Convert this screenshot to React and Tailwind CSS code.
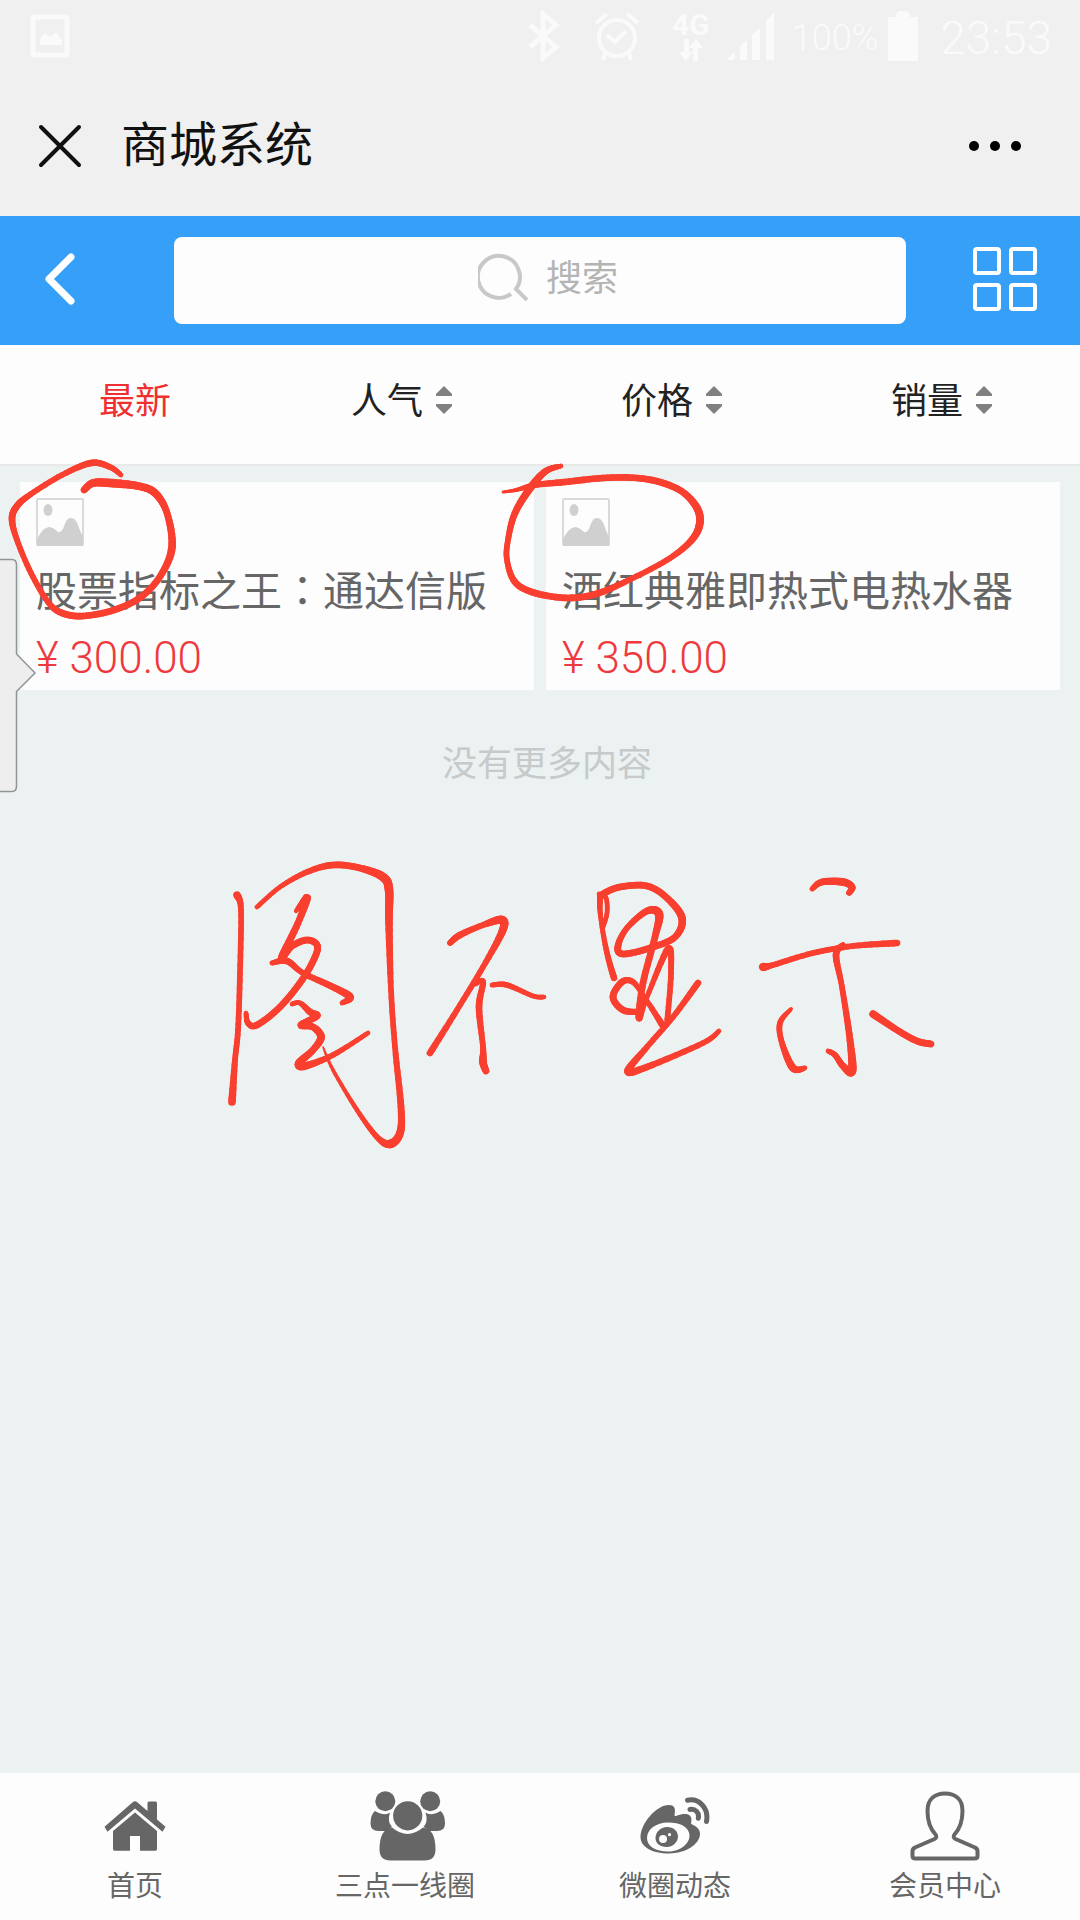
const tabs = [
  { label: "最新", active: true },
  { label: "人气", sortable: true },
  { label: "价格", sortable: true },
  { label: "销量", sortable: true },
];

const products = [
  {
    id: 1,
    name: (
      <>
        股票指标之王
        <span className="font-[family-name:'Noto_Sans_CJK_TC',sans-serif] leading-none">：</span>
        通达信版
      </>
    ),
    price: "300.00",
  },
  { id: 2, name: "酒红典雅即热式电热水器", price: "350.00" },
];

const navItems = [
  { label: "首页", icon: <HomeIcon /> },
  { label: "三点一线圈", icon: <PeopleIcon /> },
  { label: "微圈动态", icon: <WeiboIcon /> },
  { label: "会员中心", icon: <MemberIcon /> },
];

// pen strokes, every point is [x, y, pen width]
const strokes = [
  [[121, 475, 4], [110, 467, 5], [91, 463, 6], [62, 475, 5], [31, 494, 5], [17, 506, 6], [12, 519, 6], [17, 540, 5], [31, 573, 5], [48, 602, 5], [62, 613, 6], [83, 616, 6], [114, 610, 6], [141, 597, 6], [161, 575, 6], [172, 547, 7], [167, 513, 6], [155, 493, 7], [138, 486, 7], [110, 483, 8], [93, 483, 7], [84, 490, 6]],
  [[503, 492, 2], [516, 490, 3], [535, 485, 5], [565, 482, 6], [603, 478, 6], [637, 478, 6], [663, 483, 6], [684, 493, 6], [698, 510, 7], [699, 527, 7], [689, 543, 6], [667, 560, 5], [633, 578, 5], [599, 593, 6], [569, 598, 6], [535, 593, 6], [515, 582, 6], [507, 560, 5], [508, 540, 5], [515, 513, 6], [531, 487, 7], [546, 471, 6], [561, 466, 4]],
  [[237, 895, 7], [241, 910, 5], [240, 973, 5], [238, 1030, 5], [235, 1060, 5], [232, 1102, 7]],
  [[257, 907, 4], [280, 887, 4], [307, 872, 5], [333, 865, 6], [360, 868, 6], [383, 877, 8], [389, 890, 8], [389, 923, 7], [391, 990, 5], [395, 1047, 5], [401, 1107, 6], [400, 1133, 7], [390, 1144, 8], [377, 1137, 5], [357, 1110, 4], [333, 1070, 3], [323, 1047, 1]],
  [[296, 911, 3], [307, 898, 7], [298, 923, 6], [282, 957, 7], [292, 946, 6], [307, 940, 6], [317, 945, 6], [315, 957, 6], [302, 980, 6], [280, 1007, 6], [257, 1025, 6], [248, 1023, 5], [246, 1013, 4]],
  [[272, 963, 4], [287, 961, 6], [303, 973, 5], [333, 987, 6], [350, 997, 7], [342, 1003, 4]],
  [[292, 1004, 4], [300, 1003, 4], [310, 1012, 6], [317, 1016, 6], [301, 1025, 6], [313, 1027, 6], [321, 1037, 7], [313, 1050, 6], [299, 1063, 7], [305, 1066, 7], [333, 1055, 5], [368, 1033, 4]],
  [[450, 943, 5], [460, 935, 6], [483, 925, 5], [502, 920, 8], [502, 932, 7], [483, 967, 5], [457, 1010, 5], [430, 1053, 6]],
  [[475, 984, 4], [483, 982, 5], [479, 1007, 6], [483, 1047, 5], [483, 1062, 7], [486, 1071, 6]],
  [[492, 985, 4], [507, 985, 5], [533, 996, 4], [544, 997, 4]],
  [[614, 978, 6], [607, 953, 5], [601, 920, 4], [600, 900, 5], [603, 894, 6], [620, 887, 6], [647, 886, 6], [667, 898, 6], [682, 918, 7], [675, 937, 6], [650, 948, 6], [623, 954, 6], [618, 946, 6], [627, 928, 5], [647, 911, 6], [659, 914, 8], [655, 937, 6], [643, 983, 6], [639, 1018, 6], [647, 997, 4], [668, 949, 6], [671, 973, 5], [667, 1023, 5]],
  [[599, 894, 4], [606, 898, 4], [607, 913, 4], [603, 927, 4]],
  [[640, 1012, 5], [623, 1010, 6], [613, 997, 6], [622, 982, 6], [633, 982, 5], [645, 998, 4], [663, 1026, 6]],
  [[698, 983, 6], [673, 1017, 5], [647, 1047, 5], [628, 1071, 7], [647, 1067, 6], [703, 1043, 5], [719, 1031, 4]],
  [[812, 889, 4], [822, 882, 6], [843, 882, 7], [852, 887, 6], [849, 893, 5]],
  [[763, 967, 8], [773, 965, 5], [813, 953, 5], [853, 946, 5], [897, 943, 6]],
  [[843, 945, 5], [836, 955, 6], [842, 987, 5], [850, 1040, 6], [852, 1071, 8], [843, 1066, 6], [835, 1055, 5], [828, 1051, 4]],
  [[791, 1009, 3], [780, 1023, 5], [782, 1043, 5], [793, 1068, 7], [805, 1068, 4]],
  [[873, 1014, 7], [897, 1030, 6], [917, 1041, 6], [931, 1044, 6]],
];

function curve(a, b, c, d, t) {
  return (
    0.5 *
    (2 * b + (c - a) * t + (2 * a - 5 * b + 4 * c - d) * t * t + (3 * b - a - 3 * c + d) * t * t * t)
  );
}

function samplePoints(points) {
  const steps = 8;
  const result = [];

  for (let i = 0; i < points.length - 1; i++) {
    const before = points[i - 1] || points[i];
    const from = points[i];
    const to = points[i + 1];
    const after = points[i + 2] || to;

    for (let s = 0; s < steps; s++) {
      const t = s / steps;
      result.push([
        curve(before[0], from[0], to[0], after[0], t),
        curve(before[1], from[1], to[1], after[1], t),
        from[2] + (to[2] - from[2]) * t,
      ]);
    }
  }

  result.push(points[points.length - 1]);
  return result;
}

function PenStroke({ points }) {
  const samples = samplePoints(points);

  return samples.slice(1).map((point, index) => (
    <line
      key={index}
      x1={samples[index][0]}
      y1={samples[index][1]}
      x2={point[0]}
      y2={point[1]}
      strokeWidth={point[2] + 0.7}
    />
  ));
}

function PenMarks() {
  return (
    <svg
      className="absolute top-0 left-0 pointer-events-none"
      width="1080"
      height="1200"
      viewBox="0 0 1080 1200"
      stroke="#f93f2f"
      strokeLinecap="round"
      aria-hidden="true"
    >
      {strokes.map((points, index) => (
        <PenStroke key={index} points={points} />
      ))}
    </svg>
  );
}

function HomeIcon() {
  return (
    <svg width="62" height="50" viewBox="0 0 62 50" fill="currentColor" className="mb-[10px]">
      <path d="M29 1q2-1.500 4 0L43.500 10V2q0-1.500 1.500-1.500h6.500Q53 .5 53 2v16.500l8.500 7.200-3 5L31 7.500 3.500 30.700l-3-5Z" />
      <path d="M31 11.500 53 30v18q0 1.700-1.700 1.700H36V35H26v14.700H10.700Q9 49.700 9 48V30Z" />
    </svg>
  );
}

function PeopleIcon() {
  return (
    <svg width="80" height="70" viewBox="-5 0 80 70" fill="currentColor">
      <circle cx="15.300" cy="10.300" r="10" />
      <circle cx="60.200" cy="10.300" r="10" />
      <path d="M5 20q10 5.500 15 1.500-3 9 2 14.500-3 1-5 4H8.500Q.5 40 .5 32.500.5 23.500 5 20Z" />
      <path d="M70.500 20q-10 5.500-15 1.500 3 9-2 14.500 3 1 5 4H67q8 0 8-7.500 0-9-4.500-12.500Z" />
      <circle cx="37.700" cy="24.800" r="14.600" />
      <path d="M22 36.500q15.500 13 31 0 12.500 1.500 12.500 22 0 11-11 11h-34q-11 0-11-11Q9.500 38 22 36.500Z" />
    </svg>
  );
}

function WeiboIcon() {
  return (
    <svg width="70" height="58" viewBox="0 0 70 58" fill="currentColor" className="mb-[6px]">
      <path
        fillRule="evenodd"
        d="M.5 40C.5 27 16 8 29 8c5 0 7 3 5.600 9.500-.3 1.500.5 1.800 2 1.300 9-3.500 16.500-2 14.600 6.500-.4 1.500.3 2 1.500 2.500 4 1.500 7.300 5 7.300 9C60 47 46 56.500 29 56.500S.5 50 .5 40ZM28 25.500C16 25.500 7 32.500 7 41s9 13.500 21 13.500S49.500 47 49.500 38.500 40 25.500 28 25.500Z"
      />
      <path
        fillRule="evenodd"
        d="M27 30c6.500 0 11 4 11 9.500S33 50 26.500 50 15.500 46.500 15.500 41 20.500 30 27 30Zm-4 8a4 4 0 1 0 .1 8 4 4 0 0 0-.1-8Zm6.500-2a1.600 1.600 0 1 0 .1 3.200 1.600 1.600 0 0 0-.1-3.200Z"
      />
      <path
        d="M47.500 3.200C59 1 69 11 66.500 24.500M50 12.500c5-1 9.500 3 8.300 8.700"
        fill="none"
        stroke="currentColor"
        strokeWidth="5"
        strokeLinecap="round"
      />
    </svg>
  );
}

function MemberIcon() {
  return (
    <svg width="70" height="70" viewBox="0 0 70 70" fill="none" stroke="currentColor" strokeWidth="4" strokeLinejoin="round">
      <path d="M35 2.500C25 2.500 17.500 8 17.500 20c0 12 3 18 8 23.500 1.500 2 1 3.500-1 4.500L5 56.500Q2.500 58 2.500 60v5q0 2.500 3 2.500h59q3 0 3-2.500v-5q0-2-2.500-3.500L45.500 48c-2-1-2.500-2.500-1-4.500 5-5.500 8-11.500 8-23.500C52.500 8 45 2.500 35 2.500Z" />
    </svg>
  );
}

function SortIcon() {
  return (
    <svg width="18" height="28" viewBox="0 0 18 28" fill="#808080" className="mb-1">
      <path d="M9 0 17 8v2H1V8Z" />
      <path d="M9 28 17 20v-2H1v2Z" />
    </svg>
  );
}

function PlaceholderImage() {
  return (
    <svg width="48" height="48" viewBox="0 0 48 48" fill="#d0d0d0" className="block">
      <rect x="1" y="1" width="46" height="46" rx="1" fill="none" stroke="#dadada" strokeWidth="2" />
      <ellipse cx="12" cy="12" rx="4.500" ry="6" />
      <path d="M1 42C5 32 10 29 14 29q4 1 8 5 3 1 5-3C30 23 31 20 35 20s7 5 8 10l4 9v9H1Z" />
    </svg>
  );
}

function StatusBar() {
  return (
    <div className="flex h-[72px] items-center pr-7 pl-[30px] text-[#fafafa]">
      <svg width="40" height="44" viewBox="0 0 40 44" fill="none" stroke="currentColor" strokeWidth="5">
        <rect x="3" y="3" width="34" height="38" rx="1" />
        <path d="M10 31v-6l5-6 5 4 6-5 6 8v5Z" fill="currentColor" stroke="none" />
      </svg>
      <svg className="ml-auto" width="32" height="50" viewBox="0 0 32 50" fill="none" stroke="currentColor" strokeWidth="5">
        <path d="m2 14 26 22-13 11V3l13 11L2 36" />
      </svg>
      <svg className="ml-[34px]" width="46" height="50" viewBox="0 0 46 50" fill="none" stroke="currentColor" strokeWidth="4">
        <circle cx="23" cy="27" r="18" />
        <path d="m13 24 8 7 11-11M2 12l11-9M44 12 33 3M11 42l-2 7M35 42l2 7" />
      </svg>
      <div className="ml-8 flex flex-col items-center">
        <span className="text-[30px] leading-[28px] font-bold">4G</span>
        <svg width="24" height="22" viewBox="0 0 24 22" fill="currentColor">
          <path d="M5 0h5v13h4l-7 9-7-9h5ZM14 22h5V9h5l-7-9-7 9h4Z" />
        </svg>
      </div>
      <svg className="ml-[18px]" width="46" height="48" viewBox="0 0 46 48" fill="currentColor">
        <path d="M0 48v-2l7-6v8ZM12 48V34l7-6v20ZM24 48V23l8-7v32ZM38 48V9l8-9v48Z" />
      </svg>
      <span className="ml-[18px] pt-1 text-[36px] leading-none font-light">100%</span>
      <svg className="ml-[10px]" width="30" height="50" viewBox="0 0 30 50" fill="currentColor">
        <path d="M0 6h8V3l3-3h8l3 3v3h8v44H0Z" />
      </svg>
      <span className="ml-[22px] pt-1 text-[46px] leading-none font-light">23:53</span>
    </div>
  );
}

export default function App() {
  return (
    <div className="relative flex min-h-screen flex-col overflow-hidden bg-[#ecf1f2] font-[family-name:Roboto,'Noto_Sans_CJK_SC',sans-serif]">
      <header className="bg-[#f0f0f0]">
        <StatusBar />
        <div className="flex h-36 items-center pt-[3px] pr-[58px] pl-[38px] text-[#111]">
          <button type="button" aria-label="关闭">
            <svg width="44" height="44" viewBox="0 0 44 44" stroke="currentColor" strokeWidth="4" strokeLinecap="round">
              <path d="m3 3 38 38M41 3 3 41" />
            </svg>
          </button>
          <h1 className="ml-[39px] text-[48px] leading-[72px]">商城系统</h1>
          <button type="button" aria-label="更多" className="ml-auto">
            <svg width="54" height="12" viewBox="0 0 54 12" fill="#000">
              <circle cx="6" cy="6" r="5" />
              <circle cx="27" cy="6" r="5" />
              <circle cx="48" cy="6" r="5" />
            </svg>
          </button>
        </div>
      </header>

      <div className="flex h-[129px] items-center bg-[#36a0f8] pr-[42px] pl-[44px] text-white">
        <button type="button" aria-label="返回" className="mb-1">
          <svg width="32" height="52" viewBox="0 0 32 52" fill="none" stroke="currentColor" strokeWidth="7" strokeLinecap="round" strokeLinejoin="round">
            <path d="M27 4 5 26l22 22" />
          </svg>
        </button>
        <label className="mr-[66px] ml-[98px] flex h-[87px] flex-1 items-center justify-center rounded-lg bg-[#fdfdfd] pb-[10px] pl-4">
          <svg width="50" height="50" viewBox="0 0 50 50" fill="none" stroke="#c8c8c8" strokeWidth="4" className="mr-[18px]">
            <path d="M33 43A21 21 0 1 1 38 38l11 11" />
          </svg>
          <input
            type="search"
            placeholder="搜索"
            aria-label="搜索"
            className="field-sizing-content text-[36px] leading-[54px] text-[#333] outline-none placeholder:text-[#b4b4b4]"
          />
        </label>
        <button type="button" aria-label="分类" className="mb-1">
          <svg width="66" height="66" viewBox="0 0 66 66" fill="none" stroke="currentColor" strokeWidth="4">
            <rect x="3" y="3" width="24" height="24" rx="2" />
            <rect x="39" y="3" width="24" height="24" rx="2" />
            <rect x="3" y="39" width="24" height="24" rx="2" />
            <rect x="39" y="39" width="24" height="24" rx="2" />
          </svg>
        </button>
      </div>

      <div className="grid h-[121px] grid-cols-4 border-b-2 border-[#e8eaea] bg-[#fdfdfd] pb-[6px]">
        {tabs.map((tab) => (
          <button
            key={tab.label}
            type="button"
            className={`flex items-center justify-center gap-3 text-[36px] leading-[54px] ${
              tab.active ? "text-[#f03030]" : "pr-[6px] text-[#222]"
            }`}
          >
            {tab.label}
            {tab.sortable && <SortIcon />}
          </button>
        ))}
      </div>

      <main className="flex-1 px-5 pt-4">
        <div className="grid grid-cols-2 gap-3">
          {products.map((product) => (
            <a key={product.id} href="#" className="block bg-[#fdfdfd] px-4 pt-4">
              <PlaceholderImage />
              <h2 className="mt-4 text-[41px] leading-[60px] whitespace-nowrap text-[#666]">{product.name}</h2>
              <p className="pt-1 text-[44px] leading-[64px] font-light text-[#ee3a3e]">¥ {product.price}</p>
            </a>
          ))}
        </div>
        <p className="mt-12 pl-[14px] text-center text-[35px] leading-[54px] text-[#c6caca]">没有更多内容</p>
      </main>

      <button type="button" aria-label="展开" className="absolute top-[558px] left-0">
        <svg width="38" height="235" viewBox="0 0 38 235" fill="#eeeeee" stroke="#909596" strokeWidth="1.500">
          <path d="M-2 1.500H12Q16.500 1.500 16.500 7V96L35 115 16.500 133.500V228Q16.500 233.500 12 233.500H-2Z" />
        </svg>
      </button>

      <nav className="grid h-[147px] grid-cols-4 bg-[#fdfdfd]">
        {navItems.map((item) => (
          <a key={item.label} href="#" className="flex flex-col items-center pt-[18px] text-[#666]">
            <span className="flex h-[70px] items-end">{item.icon}</span>
            <span className="mt-[6px] text-[28px] leading-[40px]">{item.label}</span>
          </a>
        ))}
      </nav>

      <PenMarks />
    </div>
  );
}
